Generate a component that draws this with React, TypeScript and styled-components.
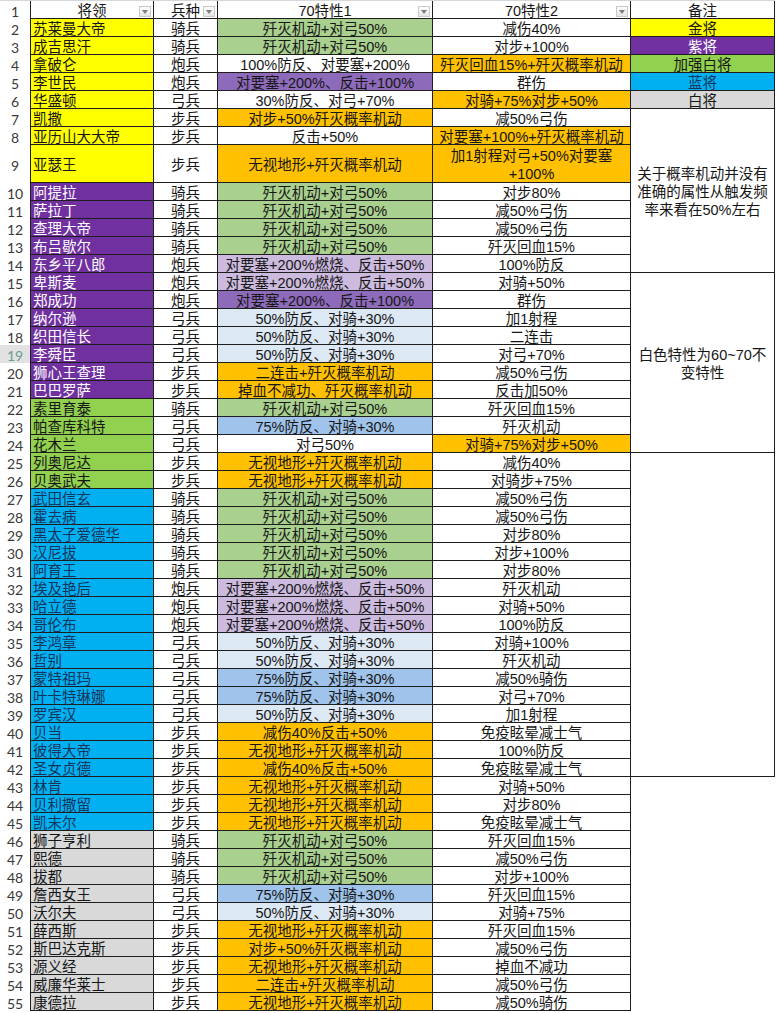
import React from "react";
import styled, { createGlobalStyle } from "styled-components";

const GlobalStyle = createGlobalStyle`
  html, body { margin: 0; padding: 0; background: #ffffff; }
  body { font-family: "Liberation Sans", "Noto Sans CJK SC", sans-serif; }
`;

type Fill =
  | "yellow" | "purple" | "green" | "blue" | "grey" | "white"
  | "olive" | "violet" | "lilac" | "ice" | "sky" | "orange";

const FILL: Record<Fill, string> = {
  yellow: "#FFFF00",
  purple: "#7030A0",
  green: "#92D050",
  blue: "#00B0F0",
  grey: "#D9D9D9",
  white: "#FFFFFF",
  olive: "#A9D08E",
  violet: "#8E6BBA",
  lilac: "#CCBADF",
  ice: "#DDE8F5",
  sky: "#9FC3EA",
  orange: "#FFC000",
};

const INK: Partial<Record<Fill, string>> = {
  purple: "#FFFFFF",
  blue: "#15345c",
};

const ink = (f: Fill) => INK[f] ?? "#161616";

const Sheet = styled.div`
  display: grid;
  grid-template-columns: 30px 124px 64px 215px 198px 144px;
  grid-template-rows: 18px repeat(7, 18px) 38px repeat(46, 18px);
  width: 775px;
  border-top: 1px solid #d6d6d6;
  font-family: "Liberation Sans", "Noto Sans CJK SC", sans-serif;
  font-size: 14.5px;
  color: #161616;
`;

const CellBase = styled.div<{ $lh?: number }>`
  box-sizing: border-box;
  display: flex;
  align-items: center;
  min-width: 0;
  padding-top: 3px;
  line-height: ${(p) => p.$lh ?? 16}px;
  white-space: pre;
  text-align: center;
`;

const RowHead = styled(CellBase)<{ $active?: boolean }>`
  justify-content: center;
  font-family: Lato, "Liberation Sans", sans-serif;
  font-size: 14px;
  color: ${(p) => (p.$active ? "#6c9c90" : "#3a3a3a")};
  background: ${(p) => (p.$active ? "#e2e2e2" : "#ffffff")};
`;

const Cell = styled(CellBase)<{ $bg: string; $fg?: string; $left?: boolean; $name?: boolean }>`
  justify-content: ${(p) => (p.$name ? "flex-start" : "center")};
  padding-left: ${(p) => (p.$name ? "2px" : "0")};
  background: ${(p) => p.$bg};
  color: ${(p) => p.$fg ?? "#161616"};
  border-right: 1px solid #1e1e1e;
  border-bottom: 1px solid #1e1e1e;
  border-left: ${(p) => (p.$left ? "1px solid #1e1e1e" : "none")};
`;

const HeadCell = styled(Cell)`
  position: relative;
`;

const FilterButton = styled.span`
  position: absolute;
  right: 2px;
  bottom: 1px;
  width: 12px;
  height: 11px;
  box-sizing: border-box;
  border: 1px solid #c9c9c9;
  background: linear-gradient(#fdfdfd, #e6e6e6);
  display: flex;
  align-items: center;
  justify-content: center;
`;

const Note = styled(CellBase)<{ $span?: number; $bg?: string; $fg?: string }>`
  grid-row: span ${(p) => p.$span ?? 1};
  justify-content: center;
  background: ${(p) => p.$bg ?? "#ffffff"};
  color: ${(p) => p.$fg ?? "#161616"};
  border-right: 1px solid #1e1e1e;
  border-bottom: 1px solid #1e1e1e;
`;

const Blank = styled.div`
  background: #ffffff;
`;

const Filter = () => (
  <FilterButton>
    <svg width="6" height="4" viewBox="0 0 6 4">
      <path d="M0 0h6L3 4z" fill="#7c7c7c" />
    </svg>
  </FilterButton>
);

type Row = { name: string; kind: string; t1: string; c1: Fill; t2: string; c2: Fill; nc: Fill };

const K = "歼灭机动+对弓50%";
const W = "无视地形+歼灭概率机动";
const F50 = "对要塞+200%燃烧、反击+50%";
const F100 = "对要塞+200%、反击+100%";
const B50 = "50%防反、对骑+30%";
const B75 = "75%防反、对骑+30%";

const r = (name: string, kind: string, t1: string, c1: Fill, t2: string, c2: Fill, nc: Fill): Row => ({
  name, kind, t1, c1, t2, c2, nc,
});

const ROWS: Row[] = [
  r("苏莱曼大帝", "骑兵", K, "olive", "减伤40%", "white", "yellow"),
  r("成吉思汗", "骑兵", K, "olive", "对步+100%", "white", "yellow"),
  r("拿破仑", "炮兵", "100%防反、对要塞+200%", "white", "歼灭回血15%+歼灭概率机动", "orange", "yellow"),
  r("李世民", "炮兵", F100, "violet", "群伤", "white", "yellow"),
  r("华盛顿", "弓兵", "30%防反、对弓+70%", "white", "对骑+75%对步+50%", "orange", "yellow"),
  r("凯撒", "步兵", "对步+50%歼灭概率机动", "orange", "减50%弓伤", "white", "yellow"),
  r("亚历山大大帝", "步兵", "反击+50%", "white", "对要塞+100%+歼灭概率机动", "orange", "yellow"),
  r("亚瑟王", "步兵", W, "orange", "加1射程对弓+50%对要塞\n+100%", "orange", "yellow"),
  r("阿提拉", "骑兵", K, "olive", "对步80%", "white", "purple"),
  r("萨拉丁", "骑兵", K, "olive", "减50%弓伤", "white", "purple"),
  r("查理大帝", "骑兵", K, "olive", "减50%弓伤", "white", "purple"),
  r("布吕歇尔", "骑兵", K, "olive", "歼灭回血15%", "white", "purple"),
  r("东乡平八郎", "炮兵", F50, "lilac", "100%防反", "white", "purple"),
  r("卑斯麦", "炮兵", F50, "lilac", "对骑+50%", "white", "purple"),
  r("郑成功", "炮兵", F100, "violet", "群伤", "white", "purple"),
  r("纳尔逊", "弓兵", B50, "ice", "加1射程", "white", "purple"),
  r("织田信长", "弓兵", B50, "ice", "二连击", "white", "purple"),
  r("李舜臣", "弓兵", B50, "ice", "对弓+70%", "white", "purple"),
  r("狮心王查理", "步兵", "二连击+歼灭概率机动", "orange", "减50%弓伤", "white", "purple"),
  r("巴巴罗萨", "步兵", "掉血不减功、歼灭概率机动", "orange", "反击加50%", "white", "purple"),
  r("素里育泰", "骑兵", K, "olive", "歼灭回血15%", "white", "green"),
  r("帕查库科特", "弓兵", B75, "sky", "歼灭机动", "white", "green"),
  r("花木兰", "弓兵", "对弓50%", "white", "对骑+75%对步+50%", "orange", "green"),
  r("列奥尼达", "步兵", W, "orange", "减伤40%", "white", "green"),
  r("贝奥武夫", "步兵", W, "orange", "对骑步+75%", "white", "green"),
  r("武田信玄", "骑兵", K, "olive", "减50%弓伤", "white", "blue"),
  r("霍去病", "骑兵", K, "olive", "减50%弓伤", "white", "blue"),
  r("黑太子爱德华", "骑兵", K, "olive", "对步80%", "white", "blue"),
  r("汉尼拔", "骑兵", K, "olive", "对步+100%", "white", "blue"),
  r("阿育王", "骑兵", K, "olive", "对步80%", "white", "blue"),
  r("埃及艳后", "炮兵", F50, "lilac", "歼灭机动", "white", "blue"),
  r("哈立德", "炮兵", F50, "lilac", "对骑+50%", "white", "blue"),
  r("哥伦布", "炮兵", F50, "lilac", "100%防反", "white", "blue"),
  r("李鸿章", "弓兵", B50, "ice", "对骑+100%", "white", "blue"),
  r("哲别", "弓兵", B50, "ice", "歼灭机动", "white", "blue"),
  r("蒙特祖玛", "弓兵", B75, "sky", "减50%骑伤", "white", "blue"),
  r("叶卡特琳娜", "弓兵", B75, "sky", "对弓+70%", "white", "blue"),
  r("罗宾汉", "弓兵", B50, "ice", "加1射程", "white", "blue"),
  r("贝当", "步兵", "减伤40%反击+50%", "orange", "免疫眩晕减士气", "white", "blue"),
  r("彼得大帝", "步兵", W, "orange", "100%防反", "white", "blue"),
  r("圣女贞德", "步兵", "减伤40%反击+50%", "orange", "免疫眩晕减士气", "white", "blue"),
  r("林肯", "步兵", W, "orange", "对骑+50%", "white", "blue"),
  r("贝利撒留", "步兵", W, "orange", "对步80%", "white", "blue"),
  r("凯末尔", "步兵", W, "orange", "免疫眩晕减士气", "white", "blue"),
  r("狮子亨利", "骑兵", K, "olive", "歼灭回血15%", "white", "grey"),
  r("熙德", "骑兵", K, "olive", "减50%弓伤", "white", "grey"),
  r("拔都", "骑兵", K, "olive", "对步+100%", "white", "grey"),
  r("詹西女王", "弓兵", B75, "sky", "歼灭回血15%", "white", "grey"),
  r("沃尔夫", "弓兵", B50, "ice", "对骑+75%", "white", "grey"),
  r("薛西斯", "步兵", W, "orange", "歼灭回血15%", "white", "grey"),
  r("斯巴达克斯", "步兵", "对步+50%歼灭概率机动", "orange", "减50%弓伤", "white", "grey"),
  r("源义经", "步兵", W, "orange", "掉血不减功", "white", "grey"),
  r("威廉华莱士", "步兵", "二连击+歼灭概率机动", "orange", "减50%弓伤", "white", "grey"),
  r("康德拉", "步兵", W, "orange", "减50%骑伤", "white", "grey"),
];

const LEGEND: Record<number, { label: string; fill: Fill }> = {
  2: { label: "金将", fill: "yellow" },
  3: { label: "紫将", fill: "purple" },
  4: { label: "加强白将", fill: "green" },
  5: { label: "蓝将", fill: "blue" },
  6: { label: "白将", fill: "grey" },
};

const renderNote = (n: number) => {
  const legend = LEGEND[n];
  if (legend) {
    return (
      <Note $bg={FILL[legend.fill]} $fg={ink(legend.fill)}>
        {legend.label}
      </Note>
    );
  }
  if (n === 7) {
    return (
      <Note $span={8} $lh={18}>
        {"关于概率机动并没有\n准确的属性从触发频\n率来看在50%左右"}
      </Note>
    );
  }
  if (n === 15) {
    return (
      <Note $span={10} $lh={18}>
        {"白色特性为60~70不\n变特性"}
      </Note>
    );
  }
  if (n === 25) {
    return <Note $span={18} />;
  }
  if (n >= 43) {
    return <Blank />;
  }
  return null;
};

export default function App() {
  return (
    <>
      <GlobalStyle />
      <Sheet>
        <RowHead>1</RowHead>
        <HeadCell $bg="#ffffff" $left>
          将领
          <Filter />
        </HeadCell>
        <HeadCell $bg="#ffffff">
          兵种
          <Filter />
        </HeadCell>
        <HeadCell $bg="#ffffff">
          70特性1
          <Filter />
        </HeadCell>
        <HeadCell $bg="#ffffff">
          70特性2
          <Filter />
        </HeadCell>
        <HeadCell $bg="#ffffff">备注</HeadCell>
        {ROWS.map((row, i) => {
          const n = i + 2;
          const multi = row.t2.includes("\n");
          return (
            <React.Fragment key={n}>
              <RowHead $active={n === 19}>{n}</RowHead>
              <Cell $left $name $bg={FILL[row.nc]} $fg={ink(row.nc)}>
                {row.name}
              </Cell>
              <Cell $bg="#ffffff">{row.kind}</Cell>
              <Cell $bg={FILL[row.c1]}>{row.t1}</Cell>
              <Cell $bg={FILL[row.c2]} $lh={multi ? 18 : undefined}>
                {row.t2}
              </Cell>
              {renderNote(n)}
            </React.Fragment>
          );
        })}
      </Sheet>
    </>
  );
}
